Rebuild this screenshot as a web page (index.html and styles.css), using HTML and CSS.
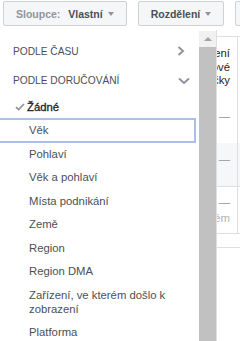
FILE: index.html
```html
<!DOCTYPE html>
<html lang="cs">
<head>
  <meta charset="UTF-8" />
  <meta name="viewport" content="width=device-width, initial-scale=1.0"/>
  <title>Rozdělení</title>
  <link rel="stylesheet" href="styles.css">
</head>
<body>
  <div class="toolbar">
    <button class="tb-btn"><span class="muted">Sloupce:</span>&nbsp;Vlastní <span class="caret"></span></button>
    <button class="tb-btn">Rozdělení <span class="caret"></span></button>
    <button class="tb-btn">Exportovat</button>
  </div>

  <div class="report">
    <div class="cell head"></div>
    <div class="cell head num">Zobrazení<br>celkové<br>značky</div>
    <div class="cell head"></div>

    <div class="cell"></div>
    <div class="cell num">—</div>
    <div class="cell"></div>

    <div class="cell alt"></div>
    <div class="cell alt num">—</div>
    <div class="cell alt"></div>

    <div class="cell last"></div>
    <div class="cell last num">—<br><span class="muted">Systém</span></div>
    <div class="cell last"></div>
  </div>
  <div class="report-foot"></div>

  <!-- dropdown for Rozdělení -->
  <div class="dropdown">
    <div class="dd-list">
      <div class="dd-head">
        <span>Podle času</span>
        <svg width="8" height="10" viewBox="0 0 8 10"><path d="M1.5 1 L6 5 L1.5 9" fill="none" stroke="#90949c" stroke-width="2"/></svg>
      </div>
      <div class="dd-head dd-head-open">
        <span>Podle doručování</span>
        <svg width="12" height="8" viewBox="0 0 12 8"><path d="M1 1.5 L6 6 L11 1.5" fill="none" stroke="#90949c" stroke-width="2"/></svg>
      </div>
      <div class="dd-item is-checked">
        <svg class="check" width="10" height="8" viewBox="0 0 10 8"><path d="M1 4.2 L3.6 6.6 L9 1" fill="none" stroke="#90949c" stroke-width="1.8"/></svg>
        Žádné
      </div>
      <div class="dd-item is-hover">Věk</div>
      <div class="dd-item">Pohlaví</div>
      <div class="dd-item">Věk a pohlaví</div>
      <div class="dd-item">Místa podnikání</div>
      <div class="dd-item">Země</div>
      <div class="dd-item">Region</div>
      <div class="dd-item">Region DMA</div>
      <div class="dd-item">Zařízení, ve kterém došlo k zobrazení</div>
      <div class="dd-item">Platforma</div>
    </div>
    <div class="dd-scroll">
      <div class="dd-up"><span class="up-arrow"></span></div>
      <div class="dd-thumb"></div>
    </div>
  </div>
</body>
</html>
```

FILE: styles.css
```css
:root {
  --text: #4b4f56;
  --text-dark: #1d2129;
  --muted: #90949c;
  --line: #dddfe2;
  --btn-bg: #f5f6f7;
  --btn-border: #ced0d4;
  --hover: #a9c1ea;
}
body {
  margin: 0;
  background: #fff;
  font-family: "Liberation Sans", Arial, sans-serif;
  color: var(--text);
  overflow: hidden;
  height: 341px;
  position: relative;
}
.toolbar {
  display: flex;
  gap: 11px;
  padding: 1px 0 0 3px;
  white-space: nowrap;
  overflow: hidden;
}
.tb-btn {
  flex: none;
  display: flex;
  align-items: center;
  gap: 5px;
  height: 25px;
  padding: 0 12px;
  background: var(--btn-bg);
  border: 1px solid var(--btn-border);
  border-radius: 2px;
  font-family: inherit;
  font-size: 10.5px;
  font-weight: bold;
  color: var(--text);
}
.tb-btn .muted {
  color: var(--muted);
}
.caret {
  display: inline-block;
  border-left: 3px solid transparent;
  border-right: 3px solid transparent;
  border-top: 4px solid var(--muted);
}

/* table under the menu */
.report {
  display: grid;
  grid-template-columns: 150px 88px 1fr;
  margin-top: 10px;
  border-top: 1px solid var(--line);
  font-size: 11.3px;
  color: var(--text-dark);
}
.cell {
  height: 43px;
  box-sizing: border-box;
}
.cell.num {
  text-align: right;
  padding: 9px 7px 0 0;
  line-height: 14px;
  border-right: 1px solid var(--line);
  color: var(--muted);
}
.cell.head {
  height: 63px;
  padding-top: 10px;
  line-height: 13.5px;
  color: var(--text-dark);
}
.cell.alt {
  background: #f6f7f9;
}
.cell.last {
  height: 48px;
  border-top: 1px solid var(--line);
  border-bottom: 1px solid var(--line);
}
.cell.last.num {
  line-height: 16px;
  padding-top: 7px;
}
.cell .muted {
  color: #b0b3b8;
}
.report-foot {
  margin-top: 13px;
  border-top: 1px solid var(--line);
}

/* dropdown menu */
.dropdown {
  position: absolute;
  top: 30px;
  left: 0;
  bottom: 0;
  width: 216px;
  display: flex;
  background: #fff;
  border-right: 1px solid var(--line);
}
.dd-list {
  width: 199px;
  padding-top: 6px;
  font-size: 11.3px;
}
.dd-head {
  display: flex;
  justify-content: space-between;
  align-items: center;
  height: 30px;
  padding: 0 14px 0 13px;
  font-size: 10.2px;
  text-transform: uppercase;
  color: var(--text);
}
.dd-head-open {
  height: 29px;
  padding-right: 9px;
}
.dd-item {
  position: relative;
  margin: 0 4px 0 -2px;
  padding: 4.75px 10px 4.75px 31px;
  line-height: 14px;
  color: var(--text);
}
.dd-item.is-checked {
  color: var(--text-dark);
  -webkit-text-stroke: 0.3px var(--text-dark);
  padding-left: 29px;
}
.dd-item .check {
  position: absolute;
  left: 17px;
  top: 8px;
}
.dd-item.is-hover {
  outline: 2px solid var(--hover);
  outline-offset: -1px;
}
.dd-scroll {
  width: 17px;
  margin-top: 1px;
  display: flex;
  flex-direction: column;
  background: #f1f1f1;
}
.dd-up {
  height: 16px;
  display: flex;
  justify-content: center;
  align-items: center;
}
.up-arrow {
  border-left: 4px solid transparent;
  border-right: 4px solid transparent;
  border-bottom: 4px solid #a3a3a3;
}
.dd-thumb {
  flex: 1;
  background: #c1c1c1;
}
```
